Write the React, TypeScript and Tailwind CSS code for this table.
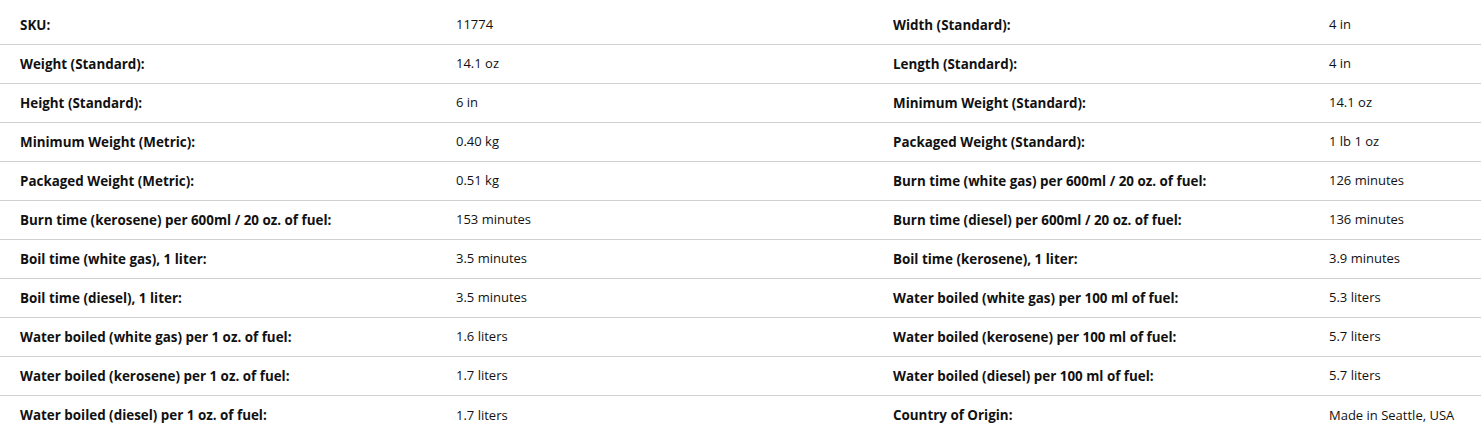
import React from "react";

const rows: [string, string, string, string][] = [
  ["SKU:", "11774", "Width (Standard):", "4 in"],
  ["Weight (Standard):", "14.1 oz", "Length (Standard):", "4 in"],
  ["Height (Standard):", "6 in", "Minimum Weight (Standard):", "14.1 oz"],
  ["Minimum Weight (Metric):", "0.40 kg", "Packaged Weight (Standard):", "1 lb 1 oz"],
  ["Packaged Weight (Metric):", "0.51 kg", "Burn time (white gas) per 600ml / 20 oz. of fuel:", "126 minutes"],
  ["Burn time (kerosene) per 600ml / 20 oz. of fuel:", "153 minutes", "Burn time (diesel) per 600ml / 20 oz. of fuel:", "136 minutes"],
  ["Boil time (white gas), 1 liter:", "3.5 minutes", "Boil time (kerosene), 1 liter:", "3.9 minutes"],
  ["Boil time (diesel), 1 liter:", "3.5 minutes", "Water boiled (white gas) per 100 ml of fuel:", "5.3 liters"],
  ["Water boiled (white gas) per 1 oz. of fuel:", "1.6 liters", "Water boiled (kerosene) per 100 ml of fuel:", "5.7 liters"],
  ["Water boiled (kerosene) per 1 oz. of fuel:", "1.7 liters", "Water boiled (diesel) per 100 ml of fuel:", "5.7 liters"],
  ["Water boiled (diesel) per 1 oz. of fuel:", "1.7 liters", "Country of Origin:", "Made in Seattle, USA"],
];

export default function App() {
  return (
    <div className="w-[1481px] h-[447px] bg-white pt-[6px] text-[#111] font-['Open_Sans',sans-serif]">
      {rows.map((r, i) => (
        <div
          key={i}
          className={`grid grid-cols-[436px_437px_436px_1fr] h-[39px] items-center ${
            i < rows.length - 1 ? "border-b border-[#d0d0d0]" : ""
          }`}
        >
          <div className="pl-5 text-[13.4px] font-bold">{r[0]}</div>
          <div className="pl-5 text-[13px]">{r[1]}</div>
          <div className="pl-5 text-[13.4px] font-bold">{r[2]}</div>
          <div className="pl-5 text-[13px]">{r[3]}</div>
        </div>
      ))}
    </div>
  );
}
